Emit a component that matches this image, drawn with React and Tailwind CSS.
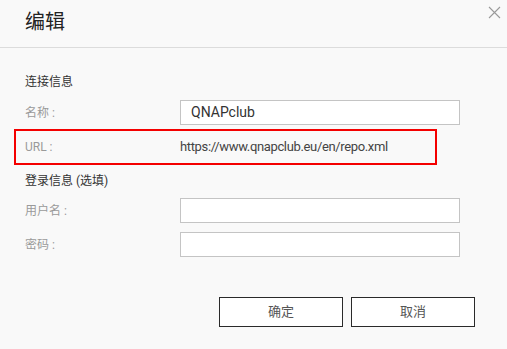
export default function App() {
  const font = { fontFamily: 'Roboto, "Noto Sans CJK SC", sans-serif' };
  return (
    <div style={font} className="w-[507px] h-[349px] bg-[#f9f9f9] relative overflow-hidden">
      <div className="h-[48px] border-b border-[#dcdcdc] flex items-center pl-[25px]">
        <span className="text-[20px] leading-[24px] text-[#222] -mt-[4px]">编辑</span>
      </div>
      <button className="absolute left-[488px] top-[6px] w-[13px] h-[13px]">
        <svg width="13" height="13" viewBox="0 0 13 13">
          <path d="M1 1 L12 12 M12 1 L1 12" stroke="#9a9a9a" strokeWidth="1.1" fill="none" />
        </svg>
      </button>
      <div className="flex flex-col">
        <div className="mt-[24px] pl-[25px] text-[12px] leading-[20px] text-[#333]">连接信息</div>
        <div className="mt-[8px] flex items-center pl-[25px]">
          <div className="w-[155px] text-[12px] text-[#9a9a9a]">名称 :</div>
          <div className="w-[280px] h-[25px] bg-white border border-[#c4c4c4] flex items-center pl-[10px] text-[14px] text-[#333]">QNAPclub</div>
        </div>
        <div className="mt-[4px] ml-[14px] w-[423px] h-[36px] border-2 border-[#f40000] flex items-center pl-[9px]">
          <div className="w-[155px] text-[12px] text-[#9a9a9a]">URL :</div>
          <div className="text-[13px] tracking-[-0.35px] text-[#444]">https://www.qnapclub.eu/en/repo.xml</div>
        </div>
        <div className="mt-[6px] pl-[25px] text-[12px] leading-[20px] text-[#333]">登录信息 (选填)</div>
        <div className="mt-[7px] flex items-center pl-[25px]">
          <div className="w-[155px] text-[12px] text-[#9a9a9a]">用户名 :</div>
          <div className="w-[280px] h-[25px] bg-white border border-[#c4c4c4]"></div>
        </div>
        <div className="mt-[9px] flex items-center pl-[25px]">
          <div className="w-[155px] text-[12px] text-[#9a9a9a]">密码 :</div>
          <div className="w-[280px] h-[25px] bg-white border border-[#c4c4c4]"></div>
        </div>
        <div className="mt-[40px] flex gap-[8px] pl-[219px]">
          <button className="w-[124px] h-[30px] bg-white border border-[#2a2a2a] text-[13px] text-[#555]">确定</button>
          <button className="w-[124px] h-[30px] bg-white border border-[#2a2a2a] text-[13px] text-[#555]">取消</button>
        </div>
      </div>
    </div>
  );
}
